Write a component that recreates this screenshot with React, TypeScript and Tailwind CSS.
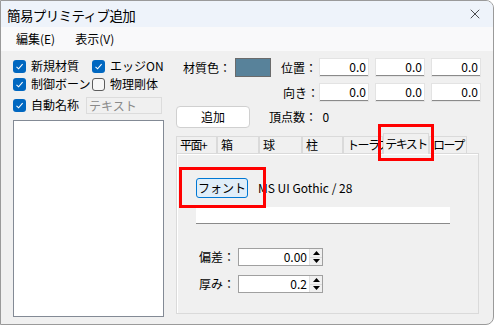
import { X } from 'lucide-react';

// 簡易プリミティブ追加 dialog — Win11-ish frame, classic controls inside

const FONT = { fontFamily: '"Noto Sans CJK JP", "Noto Sans", sans-serif' };

const Check = ({ on, label }: { on: boolean; label: string }) => (
    <div className="flex items-center h-[18px]">
        {on ? (
            <div className="w-[13px] h-[13px] rounded-[3px] bg-[#0067c0] flex items-center justify-center">
                <svg width="9" height="9" viewBox="0 0 9 9" fill="none">
                    <path d="M1.5 4.8 L3.6 6.8 L7.6 2.2" stroke="#fff" strokeWidth="1.1" />
                </svg>
            </div>
        ) : (
            <div className="w-[13px] h-[13px] rounded-[3px] border border-[#5c5c5c] bg-[#f7f7f7]" />
        )}
        <span className="ml-[5px] text-[12px] text-black leading-none">{label}</span>
    </div>
);

const NumBox = ({ v }: { v: string }) => (
    <div className="w-[48px] h-[17px] bg-white border-b border-[#8a8a8a] shadow-[0_0_0_1px_#e3e3e3] flex items-center justify-end pr-[2px] text-[12px] leading-none">
        {v}
    </div>
);

const Spin = ({ v }: { v: string }) => (
    <div className="w-[85px] h-[18px] bg-white border border-[#a0a0a0] flex items-stretch">
        <div className="flex-1 flex items-center justify-end pr-[2px] text-[12px] leading-none">{v}</div>
        <div className="w-[13px] flex flex-col border-l border-[#e0e0e0]">
            <div className="flex-1 flex items-center justify-center bg-[#f0f0f0]">
                <svg width="7" height="4" viewBox="0 0 7 4"><path d="M0 4 L3.5 0 L7 4Z" fill="#000" /></svg>
            </div>
            <div className="flex-1 flex items-center justify-center bg-[#f0f0f0] border-t border-[#dcdcdc]">
                <svg width="7" height="4" viewBox="0 0 7 4"><path d="M0 0 L3.5 4 L7 0Z" fill="#000" /></svg>
            </div>
        </div>
    </div>
);

const TABS = [
    { label: '平面+', w: 41 },
    { label: '箱', w: 42 },
    { label: '球', w: 43 },
    { label: '柱', w: 41 },
    { label: 'トーラス', w: 40 },
    { label: 'テキスト', w: 46, active: true },
    { label: 'ロープ', w: 38 },
];

export default function App() {
    return (
        <div className="w-[495px] h-[326px] bg-white" style={FONT}>
            <div className="w-[494px] h-[325px] border border-[#9a9a9a] rounded-tr-[8px] rounded-br-[8px] overflow-hidden flex flex-col bg-[#f0f0f0] text-black">
                {/* title bar */}
                <div className="h-[26px] bg-[#eef3fa] flex items-center justify-between pl-[6px] pr-[10px]">
                    <span className="text-[13.5px] tracking-[-0.6px] mt-[2px]">簡易プリミティブ追加</span>
                    <X size={16} strokeWidth={1.2} className="text-[#222]" />
                </div>
                {/* menu */}
                <div className="h-[24px] bg-[#f9f9fa] flex items-center text-[12px] pl-[15px] gap-[20px]">
                    <span>編集(E)</span>
                    <span>表示(V)</span>
                </div>

                {/* body */}
                <div className="flex flex-1 pt-[6px]">
                    {/* left column */}
                    <div className="w-[175px] pl-[12px] flex flex-col">
                        <div className="flex">
                            <div className="w-[79px] flex flex-col">
                                <Check on label="新規材質" />
                                <Check on label="制御ボーン" />
                            </div>
                            <div className="flex flex-col">
                                <Check on label="エッジON" />
                                <Check on={false} label="物理剛体" />
                            </div>
                        </div>
                        <div className="flex items-center mt-[3px] h-[18px]">
                            <Check on label="自動名称" />
                            <div className="ml-[7px] w-[76px] h-[17px] border border-[#dcdcdc] bg-[#f0f0f0] text-[12px] text-[#8a8a8a] pl-[2px] leading-[15px]">
                                テキスト
                            </div>
                        </div>
                        <div className="mt-[6px] w-[151px] h-[197px] bg-white border border-[#838a95]" />
                    </div>

                    {/* right column */}
                    <div className="flex-1 flex flex-col">
                        <div className="flex items-center h-[19px] mt-[1px]">
                            <span className="ml-[7px] text-[12px] w-[52px]">材質色：</span>
                            <div className="w-[36px] h-[19px] bg-[#58829a] border border-[#6b6b6b]" />
                            <span className="ml-[10px] text-[12px] w-[39px]">位置：</span>
                            <div className="flex gap-[8px]">
                                <NumBox v="0.0" />
                                <NumBox v="0.0" />
                                <NumBox v="0.0" />
                            </div>
                        </div>
                        <div className="flex items-center h-[17px] mt-[7px]">
                            <span className="ml-[107px] text-[12px] w-[37px]">向き：</span>
                            <div className="flex gap-[8px]">
                                <NumBox v="0.0" />
                                <NumBox v="0.0" />
                                <NumBox v="0.0" />
                            </div>
                        </div>
                        <div className="flex items-center mt-[5px]">
                            <div className="w-[74px] h-[22px] bg-white border border-[#d0d0d0] rounded-[4px] flex items-center justify-center text-[12px]">
                                追加
                            </div>
                            <span className="ml-[19px] text-[12px]">頂点数：&nbsp;&nbsp;0</span>
                        </div>

                        {/* tabs */}
                        <div className="relative mt-[6px] w-[303px]">
                            <div className="flex items-end h-[19px]">
                                {TABS.map((t) =>
                                    t.active ? (
                                        <div
                                            key={t.label}
                                            className="h-[21px] -mb-px bg-[#f0f0f0] border border-b-0 border-[#dadada] text-[12px] tracking-[-1.5px] whitespace-nowrap flex items-center justify-center z-10"
                                            style={{ width: t.w }}
                                        >
                                            {t.label}
                                        </div>
                                    ) : (
                                        <div
                                            key={t.label}
                                            className="h-[17px] bg-[#f0f0f0] border border-b-0 border-[#dadada] text-[12px] tracking-[-1.5px] flex items-center pl-[3px] whitespace-nowrap"
                                            style={{ width: t.w }}
                                        >
                                            {t.label}
                                        </div>
                                    ),
                                )}
                            </div>
                            <div className="h-[161px] border border-[#dadada] shadow-[inset_1px_1px_0_#ffffff] flex flex-col pl-[19px]">
                                <div className="flex items-center mt-[24px]">
                                    <div className="w-[52px] h-[20px] bg-[#e0eef9] border border-[#0078d4] rounded-[3px] flex items-center justify-center text-[12px]">
                                        フォント
                                    </div>
                                    <span className="ml-[10px] text-[12px]">MS UI Gothic / 28</span>
                                </div>
                                <div className="mt-[9px] w-[254px] h-[17px] bg-white border-b border-[#8a8a8a]" />
                                <div className="flex items-center mt-[24px]">
                                    <span className="ml-[3px] w-[39px] text-[12px]">偏差：</span>
                                    <Spin v="0.00" />
                                </div>
                                <div className="flex items-center mt-[9px]">
                                    <span className="ml-[3px] w-[39px] text-[12px]">厚み：</span>
                                    <Spin v="0.2" />
                                </div>
                            </div>
                            {/* annotation boxes */}
                            <div className="absolute left-[202px] top-[-10px] w-[56px] h-[37px] border-[3px] border-[#ff0000] pointer-events-none z-20" />
                            <div className="absolute left-[3px] top-[33px] w-[87px] h-[41px] border-[3px] border-[#ff0000] pointer-events-none z-20" />
                        </div>
                    </div>
                </div>
            </div>
        </div>
    );
}
